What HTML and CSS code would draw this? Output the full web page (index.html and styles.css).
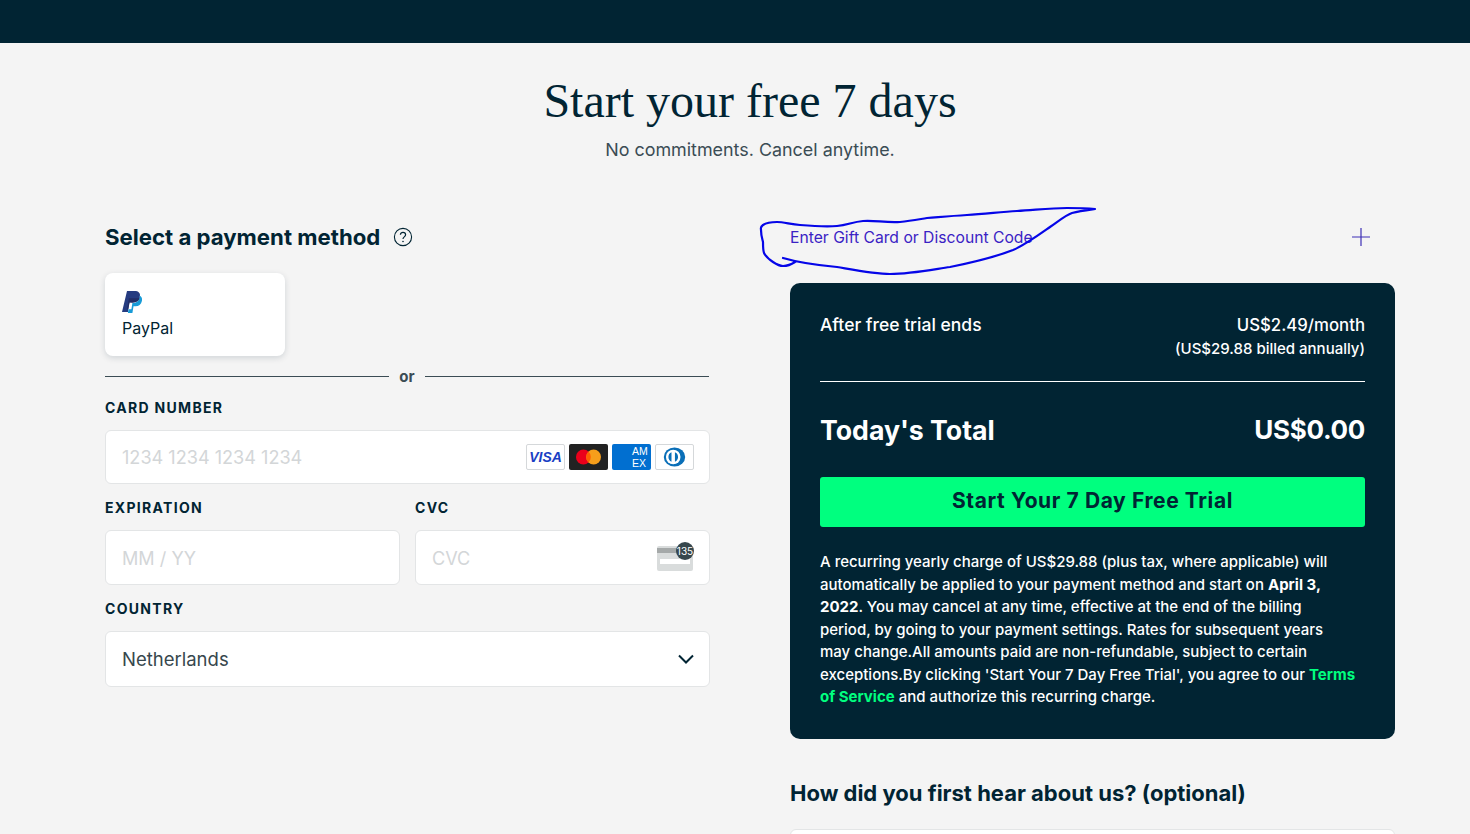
FILE: index.html
```html
<!doctype html>
<html lang="en">
  <head>
    <meta charset="UTF-8" />
    <meta name="viewport" content="width=device-width, initial-scale=1.0" />
    <title>Start your free 7 days</title>
    <link rel="stylesheet" href="styles.css">
  </head>
  <body>
    <div class="top-bar"></div>

    <main class="page">
      <header class="page-head">
        <h1>Start your free 7 days</h1>
        <p>No commitments. Cancel anytime.</p>
      </header>

      <div class="columns">
        <section class="payment">
          <div class="payment-title">
            <h2>Select a payment method</h2>
            <svg class="help-icon" viewBox="0 0 20 20" width="20" height="20" fill="none" stroke="#012433">
              <circle cx="10" cy="10" r="8.6" stroke-width="1.1" />
              <path d="M7.4 7.8c0-1.5 1.2-2.5 2.6-2.5s2.6 1 2.6 2.4c0 2.200-2.600 2.100-2.600 4.300" stroke-width="1.2" />
              <circle cx="10" cy="14.500" r=".8" fill="#012433" stroke="none" />
            </svg>
          </div>

          <button class="paypal-card">
            <svg viewBox="0 0 20 23" width="20" height="23">
              <path fill="#253b80" d="M5 0h7.500c4 0 6 2 5.400 5.300-.7 4-3.500 6-7.400 6H7.600L6.300 18.500l-.4 2.600H0z" />
              <path fill="#189bd7" d="M17.800 4.800c2 1 2.600 2.800 2.100 5.100-.7 3.500-3.100 5.300-6.400 5.300h-2L10.400 22H5.900l.6-3.700h2.900l1-6.200c4.300.1 7-2.200 7.400-7.300z" />
              <path fill="#222d65" d="M6.900 7.300h7c1.400 0 2.900.1 3.900-1.200-.500 3.700-3.200 5.600-7.400 5.600l-3-.1-1.200 6.700H5z" />
            </svg>
            <span>PayPal</span>
          </button>

          <div class="divider"><span>or</span></div>

          <label class="field-label">CARD NUMBER</label>
          <div class="input card-input">
            <span class="placeholder">1234 1234 1234 1234</span>
            <div class="card-logos">
              <span class="logo logo-visa">VISA</span>
              <span class="logo logo-mc">
                <svg viewBox="0 0 40 28" width="39" height="26">
                  <circle cx="14.500" cy="14" r="8" fill="#eb001b" />
                  <circle cx="25.500" cy="14" r="8" fill="#f79e1b" />
                  <path d="M20 8.200a8 8 0 0 1 0 11.600 8 8 0 0 1 0-11.600z" fill="#ff5f00" />
                </svg>
              </span>
              <span class="logo logo-amex">AM<br>EX</span>
              <span class="logo logo-diners">
                <svg viewBox="0 0 40 28" width="38" height="24">
                  <ellipse cx="20" cy="14" rx="12.500" ry="11" fill="#0a6fb8" />
                  <circle cx="18.500" cy="14" r="8.500" fill="#fff" />
                  <path d="M16.500 8.500v11a6 6 0 0 1 0-11zM20.500 8.500a6 6 0 0 1 0 11z" fill="#0a6fb8" />
                </svg>
              </span>
            </div>
          </div>

          <div class="field-row">
            <div class="field">
              <label class="field-label">EXPIRATION</label>
              <div class="input tall"><span class="placeholder">MM / YY</span></div>
            </div>
            <div class="field">
              <label class="field-label">CVC</label>
              <div class="input tall cvc-input">
                <span class="placeholder">CVC</span>
                <span class="cvc-icon">
                  <svg viewBox="0 0 36 26" width="36" height="26">
                    <rect y="1" width="36" height="25" rx="2" fill="#d9dcdc" />
                    <rect y="3" width="36" height="5" fill="#a5a9a9" />
                    <rect x="3" y="14" width="30" height="5" fill="#fff" />
                  </svg>
                  <b>135</b>
                </span>
              </div>
            </div>
          </div>

          <label class="field-label">COUNTRY</label>
          <div class="input select-input">
            <span>Netherlands</span>
            <svg viewBox="0 0 16 10" width="16" height="10" fill="none" stroke="#012433" stroke-width="2">
              <path d="M1 1.500l7 7 7-7" />
            </svg>
          </div>
        </section>

        <section class="summary">
          <div class="gift-row">
            <a href="#">Enter Gift Card or Discount Code</a>
            <svg viewBox="0 0 18 18" width="18" height="18" stroke="#3d2fb5" stroke-width="1.200">
              <path d="M9 0v18M0 9h18" />
            </svg>
          </div>

          <div class="panel">
            <div class="trial-row">
              <span>After free trial ends</span>
              <div class="trial-price">
                <span>US$2.49/month</span>
                <small>(US$29.88 billed annually)</small>
              </div>
            </div>

            <div class="total-row">
              <span>Today's Total</span>
              <span class="total-amount">US$0.00</span>
            </div>

            <button class="start-button">Start Your 7 Day Free Trial</button>

            <p class="legal">
              A recurring yearly charge of US$29.88 (plus tax, where applicable) will<br>
              automatically be applied to your payment method and start on <b>April 3,<br>
              2022</b>. You may cancel at any time, effective at the end of the billing<br>
              period, by going to your payment settings. Rates for subsequent years<br>
              may change.All amounts paid are non-refundable, subject to certain<br>
              exceptions.By clicking 'Start Your 7 Day Free Trial', you agree to our
              <a href="#">Terms<br>of Service</a> and authorize this recurring charge.
            </p>
          </div>

          <h3>How did you first hear about us? (optional)</h3>
          <div class="input survey-input"></div>
        </section>
      </div>
    </main>

    <!-- hand drawn marker scribble on top of the screenshot -->
    <svg class="scribble" viewBox="0 0 1470 834" width="1470" height="834" fill="none" stroke="#0505e8" stroke-width="2.200" stroke-linejoin="round" stroke-linecap="round">
      <path d="M783 258C800 263 815 265 837 267C860 271 875 274 890 274C910 274 930 270 950 267C970 263 995 257 1013 250C1025 245 1040 234 1050 227C1060 220 1066 215 1072 213C1080 211 1088 210 1095 209C1085 208 1075 208 1067 208C1050 208 1035 210 1017 211C1000 212 985 214 967 215C950 216 940 217 927 218C915 220 910 221 900 222C885 223 875 220 863 221C852 222 848 225 837 226C825 227 812 226 800 225C790 224 783 222 777 222C771 222 766 223 763 225C760 227 761 228 761 230C761 235 762 238 763 242C763 246 763 250 764 253C766 257 770 260 773 262C776 264 780 266 783 266C787 266 792 264 795 262" />
    </svg>
  </body>
</html>
```

FILE: styles.css
```css
:root {
  --color-navy: #012433;
  --color-green: #00ff7f;
  --color-background: #f4f4f4;
  --color-border: #e3e5e6;
  --color-placeholder: #d3d6d8;
  --color-link: #3a22c4;
  --font-sans: Inter, "Noto Sans", sans-serif;
  --font-serif: "Liberation Serif", serif;
}

html,
body {
  height: 834px;
  overflow: hidden;
}

body {
  margin: 0;
  position: relative;
  font-family: var(--font-sans);
  background: var(--color-background);
  color: var(--color-navy);
}

.top-bar {
  height: 43px;
  background: var(--color-navy);
}

.page {
  width: 1290px;
  margin-left: 105px;
}

.page-head {
  text-align: center;
  padding-top: 31px;
  height: 157px;
  box-sizing: border-box;
}

.page-head h1 {
  font-family: var(--font-serif);
  font-size: 48px;
  line-height: 54px;
  font-weight: 400;
  margin: 0;
}

.page-head p {
  font-size: 17.900px;
  line-height: 24px;
  margin: 10px 0 0;
  color: #3b4c54;
}

.columns {
  display: flex;
  gap: 80px;
}

.payment,
.summary {
  width: 605px;
}

/* left column */
.payment-title {
  display: flex;
  align-items: center;
  gap: 13px;
  height: 73px;
  box-sizing: border-box;
}

.payment-title h2 {
  font-size: 22.200px;
  font-weight: 700;
  margin: 0;
}

.help-icon {
  flex: none;
}

.paypal-card {
  display: flex;
  flex-direction: column;
  align-items: flex-start;
  gap: 4px;
  width: 180px;
  height: 83px;
  padding: 18px 17px 0;
  box-sizing: border-box;
  background: white;
  border: none;
  border-radius: 8px;
  box-shadow: 0 2px 6px rgba(1, 36, 51, 0.15);
  font-family: var(--font-sans);
  font-size: 16px;
  color: var(--color-navy);
}

.divider {
  display: flex;
  align-items: center;
  gap: 10px;
  height: 20px;
  margin: 10px 0 14px;
  width: 604px;
  font-size: 15px;
  font-weight: 700;
  color: #3b4c54;
}

.divider::before,
.divider::after {
  content: "";
  flex: 1;
  height: 1px;
  background: #3b4c54;
}

.field-label {
  display: block;
  font-size: 14px;
  font-weight: 700;
  letter-spacing: 1.300px;
  line-height: 16px;
  margin-bottom: 14px;
}

.input {
  display: flex;
  align-items: center;
  justify-content: space-between;
  box-sizing: border-box;
  height: 55px;
  padding: 0 15px 0 16px;
  background: white;
  border: 1px solid var(--color-border);
  border-radius: 6px;
  font-size: 18.500px;
}

.placeholder {
  color: var(--color-placeholder);
  font-size: 18.100px;
}

.card-input {
  height: 54px;
  margin-bottom: 16px;
}

.card-logos {
  display: flex;
  gap: 4px;
}

.logo {
  display: flex;
  align-items: center;
  justify-content: center;
  box-sizing: border-box;
  width: 39px;
  height: 26px;
  border-radius: 2px;
  overflow: hidden;
}

.logo-visa {
  background: white;
  border: 1px solid #d5d8da;
  color: #1a3fc4;
  font-family: "Liberation Sans", sans-serif;
  font-size: 14px;
  font-weight: 700;
  font-style: italic;
}

.logo-mc {
  background: #222;
}

.logo-amex {
  display: block;
  background: #016fd0;
  color: white;
  font-family: "Liberation Sans", sans-serif;
  font-size: 10.500px;
  line-height: 12px;
  padding: 1px 0 0 20px;
  white-space: nowrap;
}

.logo-diners {
  background: white;
  border: 1px solid #d5d8da;
}

.field-row {
  display: flex;
  gap: 15px;
  margin-bottom: 16px;
}

.field {
  flex: 1;
}

.cvc-input {
  padding-right: 16px;
}

.cvc-icon {
  position: relative;
  display: flex;
}

.cvc-icon b {
  position: absolute;
  top: -3px;
  right: -1px;
  width: 18px;
  height: 18px;
  border-radius: 50%;
  background: #37474d;
  color: white;
  font-size: 10px;
  font-weight: 400;
  line-height: 18px;
  text-align: center;
}

.select-input {
  height: 56px;
  color: #37474d;
}

/* right column */
.gift-row {
  display: flex;
  align-items: center;
  justify-content: space-between;
  height: 83px;
  padding: 0 25px 9px 0;
  box-sizing: border-box;
  font-size: 15.700px;
}

.gift-row a {
  color: var(--color-link);
  text-decoration: none;
}

.panel {
  box-sizing: border-box;
  height: 456px;
  padding: 30px;
  background: var(--color-navy);
  border-radius: 10px;
  color: white;
}

.trial-row {
  display: flex;
  justify-content: space-between;
  box-sizing: border-box;
  height: 69px;
  padding-top: 1px;
  border-bottom: 1px solid white;
  font-size: 17.500px;
  line-height: 22px;
  font-weight: 500;
}

.trial-price {
  display: flex;
  flex-direction: column;
  align-items: flex-end;
  gap: 2px;
}

.trial-price span {
  font-size: 16.800px;
}

.trial-price small {
  font-size: 15px;
}

.total-row {
  display: flex;
  justify-content: space-between;
  align-items: center;
  height: 95px;
  font-size: 26.700px;
  font-weight: 700;
}

.total-amount {
  font-size: 26px;
  letter-spacing: -0.3px;
}

.start-button {
  display: block;
  width: 100%;
  height: 50px;
  padding: 0 0 3px;
  border: none;
  border-radius: 3px;
  background: var(--color-green);
  color: var(--color-navy);
  font-family: var(--font-sans);
  font-size: 21px;
  font-weight: 700;
  letter-spacing: 0.6px;
}

.legal {
  font-size: 15px;
  font-weight: 500;
  line-height: 22.500px;
  margin: 24px 0 0;
}

.legal a {
  color: var(--color-green);
  font-weight: 700;
  text-decoration: none;
}

.summary h3 {
  font-size: 22px;
  font-weight: 700;
  line-height: 28px;
  margin: 40px 0 22px;
}

.survey-input {
  height: 60px;
}

.scribble {
  position: absolute;
  top: 0;
  left: 0;
  pointer-events: none;
}
```
